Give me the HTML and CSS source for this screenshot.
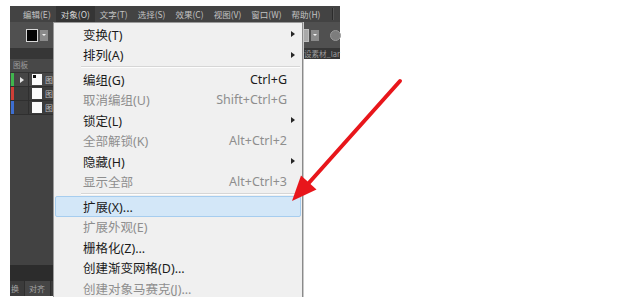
FILE: index.html
```html
<!DOCTYPE html>
<html lang="zh">
<head>
<meta charset="utf-8">
<link rel="stylesheet" href="styles.css">
</head>
<body>
<div class="app">
  <div class="menubar">
    <span class="mb-item">编辑(E)</span>
    <span class="mb-item active">对象(O)</span>
    <span class="mb-item">文字(T)</span>
    <span class="mb-item">选择(S)</span>
    <span class="mb-item">效果(C)</span>
    <span class="mb-item">视图(V)</span>
    <span class="mb-item">窗口(W)</span>
    <span class="mb-item">帮助(H)</span>
    <span class="mb-sep"></span>
  </div>
  <div class="toolbar">
    <span class="swatch black"></span>
    <span class="dd"></span>
    <span class="tb-fill"></span>
    <span class="swatch gray"></span>
    <span class="dd"></span>
    <span class="circle"></span>
  </div>
  <div class="tabstrip"><span class="doc-title">设素材_lar</span></div>
  <div class="sidebar">
    <div class="panel-label">图板</div>
    <div class="layer sel">
      <span class="cbar green"></span>
      <span class="eye"><span class="tri"></span></span>
      <span class="thumb"><span class="mark"></span></span>
      <span class="lname">图</span>
    </div>
    <div class="layer">
      <span class="cbar red"></span>
      <span class="eye"></span>
      <span class="thumb"></span>
      <span class="lname">图</span>
    </div>
    <div class="layer">
      <span class="cbar blue"></span>
      <span class="eye"></span>
      <span class="thumb"></span>
      <span class="lname">图</span>
    </div>
    <div class="panel-fill"></div>
    <div class="panel-dark"></div>
    <div class="panel-tabs">
      <span class="ptab">换</span>
      <span class="ptab">对齐</span>
    </div>
  </div>

  <div class="menu">
    <div class="item"><span class="lbl">变换(T)</span><span class="sc"></span><span class="sub"><i class="arr"></i></span></div>
    <div class="item"><span class="lbl">排列(A)</span><span class="sc"></span><span class="sub"><i class="arr"></i></span></div>
    <div class="sep"></div>
    <div class="item"><span class="lbl">编组(G)</span><span class="sc">Ctrl+G</span><span class="sub"></span></div>
    <div class="item dis"><span class="lbl">取消编组(U)</span><span class="sc">Shift+Ctrl+G</span><span class="sub"></span></div>
    <div class="item"><span class="lbl">锁定(L)</span><span class="sc"></span><span class="sub"><i class="arr"></i></span></div>
    <div class="item dis"><span class="lbl">全部解锁(K)</span><span class="sc">Alt+Ctrl+2</span><span class="sub"></span></div>
    <div class="item"><span class="lbl">隐藏(H)</span><span class="sc"></span><span class="sub"><i class="arr"></i></span></div>
    <div class="item dis"><span class="lbl">显示全部</span><span class="sc">Alt+Ctrl+3</span><span class="sub"></span></div>
    <div class="sep"></div>
    <div class="item hot"><span class="lbl">扩展(X)...</span><span class="sc"></span><span class="sub"></span></div>
    <div class="item dis"><span class="lbl">扩展外观(E)</span><span class="sc"></span><span class="sub"></span></div>
    <div class="item"><span class="lbl">栅格化(Z)...</span><span class="sc"></span><span class="sub"></span></div>
    <div class="item"><span class="lbl">创建渐变网格(D)...</span><span class="sc"></span><span class="sub"></span></div>
    <div class="item dis"><span class="lbl">创建对象马赛克(J)...</span><span class="sc"></span><span class="sub"></span></div>
  </div>
</div>

<svg class="annot" width="620" height="297" viewBox="0 0 620 297" xmlns="http://www.w3.org/2000/svg">
  <line x1="400" y1="81" x2="307" y2="185" stroke="#e8161b" stroke-width="4" stroke-linecap="round"/>
  <polygon points="292,201 301,175.5 316.5,189.5" fill="#e8161b"/>
</svg>
</body>
</html>
```

FILE: styles.css
```css
html, body {
  margin: 0;
  padding: 0;
}
body {
  width: 620px;
  height: 297px;
  overflow: hidden;
  background: #ffffff;
  position: relative;
  font-family: "Noto Sans", "Noto Sans CJK SC", sans-serif;
}

.app {
  position: relative;
  margin: 6px 0 0 10px;
  width: 330px;
  height: 291px;
}

/* menu bar */
.menubar {
  height: 16px;
  background: #434343;
  display: flex;
  align-items: center;
  padding-left: 8px;
  font-size: 8.5px;
  color: #c2c2c2;
  font-family: "Noto Sans CJK SC", "Noto Sans", sans-serif;
}
.mb-item {
  height: 16px;
  line-height: 16px;
  padding: 0 5px;
  white-space: nowrap;
}
.mb-item.active {
  background: #353535;
  color: #d8d8d8;
}
.mb-sep {
  width: 1px;
  height: 12px;
  margin-left: 7px;
  background: #2c2c2c;
  box-shadow: 1px 0 0 #555;
}

/* toolbar */
.toolbar {
  height: 26px;
  background: #505050;
  display: flex;
  align-items: center;
  padding-left: 16px;
}
.swatch {
  width: 10px;
  height: 11px;
  border: 1px solid #d8d8d8;
}
.swatch.black { background: #050505; }
.swatch.gray { background: #a9a9a9; border-color: #bdbdbd; }
.dd {
  width: 8px;
  height: 11px;
  margin-left: 2px;
  background: #8a8a8a;
  position: relative;
}
.dd::after {
  content: "";
  position: absolute;
  left: 2px;
  top: 4.5px;
  border-left: 2px solid transparent;
  border-right: 2px solid transparent;
  border-top: 2px solid #f4f4f4;
}
.tb-fill { flex: 1; }
.circle {
  width: 9px;
  height: 9px;
  border-radius: 50%;
  margin: 0 -1px 0 11px;
  background: #7d7d7d;
  border: 1px solid #9a9a9a;
}

/* document tab strip */
.tabstrip {
  height: 11px;
  background: #363636;
  display: flex;
  justify-content: flex-end;
  align-items: center;
}
.doc-title {
  font-size: 7.5px;
  color: #9d9d9d;
  white-space: nowrap;
  font-family: "Noto Sans CJK SC", "Noto Sans", sans-serif;
}

/* left panel */
.sidebar {
  width: 43px;
  height: 237px;
  background: #424242;
  display: flex;
  flex-direction: column;
  font-family: "Noto Sans CJK SC", "Noto Sans", sans-serif;
}
.panel-label {
  height: 13px;
  line-height: 12px;
  padding-left: 3px;
  font-size: 7.5px;
  color: #9c9c9c;
  background: #484848;
  border-bottom: 1px solid #333;
}
.layer {
  height: 13px;
  display: flex;
  align-items: center;
  background: #3c3c3c;
  border-bottom: 1px solid #2f2f2f;
}
.layer.sel { background: #464646; }
.cbar {
  width: 3px;
  height: 13px;
  margin-left: 1px;
}
.cbar.green { background: #3fb54d; }
.cbar.red { background: #cf3f37; }
.cbar.blue { background: #3d6ed0; }
.eye {
  width: 15px;
  height: 13px;
  display: flex;
  align-items: center;
  padding-left: 6px;
  box-sizing: border-box;
  border-right: 1px solid #2f2f2f;
}
.tri {
  width: 0;
  height: 0;
  border-top: 3px solid transparent;
  border-bottom: 3px solid transparent;
  border-left: 4px solid #e6e6e6;
}
.thumb {
  width: 11px;
  height: 11px;
  margin-left: 3px;
  background: #fbfbfb;
  position: relative;
}
.mark {
  position: absolute;
  left: 1px;
  top: 1px;
  width: 3px;
  height: 3px;
  background: #111;
}
.lname {
  margin-left: 3px;
  font-size: 8px;
  color: #bdbdbd;
}
.panel-fill { flex: 1; }
.panel-dark {
  height: 16px;
  background: #2c2c2c;
}
.panel-tabs {
  height: 15px;
  display: flex;
  align-items: center;
  background: #3b3b3b;
  font-size: 8px;
  color: #a6a6a6;
}
.ptab {
  height: 15px;
  line-height: 15px;
  padding: 0 5px 0 1px;
  border-right: 1px solid #2e2e2e;
}
.ptab + .ptab {
  padding-left: 4px;
  background: #454545;
}

/* context menu */
.menu {
  position: absolute;
  left: 43px;
  top: 16px;
  width: 248px;
  height: 274px;
  overflow: hidden;
  background: #f0f0f0;
  border: 1px solid #9a9a9a;
  border-bottom: 0;
  border-right-color: #8a8a8a;
  box-shadow: 1px 0 0 #c9c9c9;
  padding-top: 1px;
  font-size: 12.5px;
  color: #1b1b1b;
  font-family: "Noto Sans", "Noto Sans CJK SC", sans-serif;
}
.item {
  height: 20.5px;
  display: grid;
  grid-template-columns: 1fr auto 15px;
  align-items: center;
  padding-left: 29px;
  box-sizing: border-box;
  white-space: nowrap;
}
.item.dis { color: #8e8e8e; }
.item.hot {
  margin: 0 1px;
  padding-left: 27px;
  background: #d3e7f8;
  border: 1px solid #a6cdef;
  border-radius: 2px;
}
.sub {
  display: flex;
  align-items: center;
  padding-left: 4px;
}
.arr {
  width: 0;
  height: 0;
  border-top: 3.5px solid transparent;
  border-bottom: 3.5px solid transparent;
  border-left: 4px solid #262626;
}
.sep {
  height: 4px;
  display: flex;
  align-items: center;
  padding-left: 27px;
  padding-right: 2px;
}
.sep::before {
  content: "";
  flex: 1;
  height: 0;
  border-top: 1px solid #d6d6d6;
  border-bottom: 1px solid #fdfdfd;
}

/* annotation arrow */
.annot {
  position: absolute;
  left: 0;
  top: 0;
  pointer-events: none;
}
```
